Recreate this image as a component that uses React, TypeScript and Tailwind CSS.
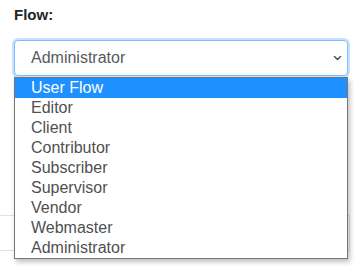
const options = [
  "User Flow",
  "Editor",
  "Client",
  "Contributor",
  "Subscriber",
  "Supervisor",
  "Vendor",
  "Webmaster",
  "Administrator",
];

function Chevron() {
  return (
    <svg width="9" height="6" viewBox="0 0 9 6" fill="none">
      <path d="M1.5 1.5l3 3 3-3" stroke="#495057" strokeWidth="1.5" strokeLinecap="round" strokeLinejoin="round" />
    </svg>
  );
}

export default function App() {
  return (
    <div className="relative min-h-screen bg-white font-['Liberation_Sans',Arial,sans-serif] overflow-hidden">
      <div className="px-[14px] pt-[3px]">
        <label className="block text-[15px] font-bold leading-6 text-[#212529]">Flow:</label>

        <div className="mt-[13px] flex h-[36px] w-[334px] items-center justify-between rounded-[4px] border border-[#80bdff] bg-white pl-[16px] pr-[5px] shadow-[0_0_0_2px_rgba(0,123,255,0.22)]">
          <span className="text-[16px] text-[#55595e]">Administrator</span>
          <Chevron />
        </div>

        <div className="-ml-[20px] mt-[139px] h-[36px] w-[356px] border border-[#dee2e6] border-l-0" />
      </div>

      <ul className="absolute left-[14px] top-[77px] w-[334px] border border-[#767676] bg-white shadow-[2px_3px_5px_rgba(0,0,0,0.25)]">
        {options.map((o, i) => (
          <li
            key={o}
            className={
              i === 0
                ? "h-[20px] bg-[#1e90ff] pl-[16px] text-[16px] leading-[20px] text-white"
                : "h-[20px] pl-[16px] text-[16px] leading-[20px] text-[#505050]"
            }
          >
            {o}
          </li>
        ))}
      </ul>
    </div>
  );
}
